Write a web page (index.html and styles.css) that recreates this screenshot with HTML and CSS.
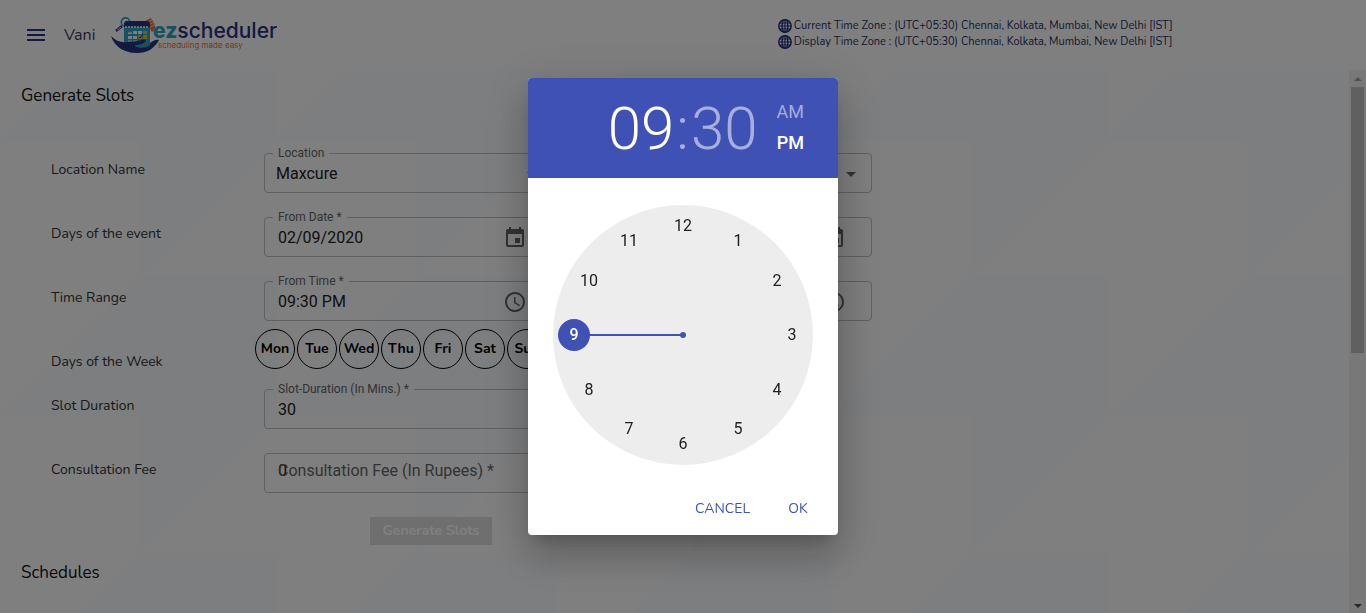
FILE: index.html
```html
<!DOCTYPE html>
<html lang="en">
<head>
<meta charset="utf-8">
<meta name="viewport" content="width=device-width, initial-scale=1">
<title>ezscheduler - Generate Slots</title>
<link rel="stylesheet" href="styles.css">
</head>
<body>
<svg width="0" height="0" class="sprite" aria-hidden="true">
  <symbol id="calendar" viewBox="0 0 24 24"><path d="M17 12h-5v5h5v-5zM16 1v2H8V1H6v2H5c-1.11 0-1.99.9-1.99 2L3 19c0 1.1.89 2 2 2h14c1.1 0 2-.9 2-2V5c0-1.1-.9-2-2-2h-1V1h-2zm3 18H5V8h14v11z"/></symbol>
  <symbol id="clock" viewBox="0 0 24 24"><path d="M11.99 2C6.47 2 2 6.48 2 12s4.47 10 9.99 10C17.52 22 22 17.52 22 12S17.52 2 11.99 2zM12 20c-4.42 0-8-3.58-8-8s3.58-8 8-8 8 3.58 8 8-3.58 8-8 8z"/><path d="M12.5 7H11v6l5.25 3.15.75-1.23-4.5-2.67z"/></symbol>
  <symbol id="arrow" viewBox="0 0 24 24"><path d="M7 10l5 5 5-5z"/></symbol>
  <symbol id="globe" viewBox="0 0 16 16"><g fill="none" stroke="currentColor" stroke-width="1.5"><circle cx="8" cy="8" r="6.2"/><ellipse cx="8" cy="8" rx="2.9" ry="6.2"/><path d="M8 2v12M2 8h12M2.8 5h10.4M2.8 11h10.4" stroke-width="1.2"/></g></symbol>
</svg>

<header class="topbar">
  <button class="menu" aria-label="Menu"><span></span><span></span><span></span></button>
  <span class="user">Vani</span>
  <a class="logo" href="#" aria-label="ezscheduler">
    <svg class="logo-mark" viewBox="0 0 48 38" aria-hidden="true">
      <path d="M34 5l6-3 1 2 1 1 3 8-4 3z" fill="#e8743b"/>
      <path d="M37 6l4-2M38 8.500l4-2M39.500 11l4-2" stroke="#fff" stroke-width=".7"/>
      <path d="M13 9h26v19c-1 4-7 5-13 5-7 0-13-3-13-8z" fill="#2aa5c5"/>
      <path d="M15 11h22v13q-5 3-10 3l-7-1-5-1z" fill="#2aa5c5"/>
      <circle cx="14.500" cy="6" r="4.200" fill="#fff" stroke="#2aa5c5" stroke-width="1.700"/>
      <path d="M13 11V8q0-3 3-3h20q3 0 3 3v3z" fill="#263282"/>
      <path d="M15 10v2M18 10v2M21 10v2M24 10v2M27 10v2M30 10v2M33 10v2M36 10v2" stroke="#fff" stroke-width="1.500"/>
      <path d="M11 10L5 15" stroke="#263282" stroke-width="2.600"/>
      <path d="M10 11L6 14.300" stroke="#fff" stroke-width=".8"/>
      <path d="M17 15h4v3h-4zM22 15h4v3h-4zM27 15h4v3h-4zM17 20h4v3h-4zM22 20h4v3h-4zM32 20h4v3h-4zM17 24.500h4v2h-4zM22 24.500h4v2h-4z" fill="#fff"/>
      <path d="M32 15h4v3h-4zM27 19h4v4h-4zM32 19h4v4h-4z" fill="#f4b52b"/>
      <path d="M17 15h4v1.500h-4z" fill="#e8743b"/>
      <path d="M28 21l1 1 3-4" fill="none" stroke="#263282"/>
      <path d="M0 20c5 5 10 7 16 6 4-1 9 0 15-2 3-1 5 0 3 2-2 2-5 2-8 3l-3 1c6 2 12 0 16-3 3-2 6-4 9-3-5 9-12 13-22 13C11 37 3 29 0 20z" fill="#263282"/>
      <path d="M24 30c5-1 8-1 11-4l4-1v4c-4 3-10 4-15 1z" fill="#2aa5c5"/>
    </svg>
    <span class="logo-text"><span class="brand"><b>ez</b>scheduler</span><span class="tagline">scheduling made easy</span></span>
  </a>
  <div class="zones">
    <div class="zone"><svg><use href="#globe"/></svg><span>Current Time Zone : (UTC+05:30) Chennai, Kolkata, Mumbai, New Delhi [IST]</span></div>
    <div class="zone"><svg><use href="#globe"/></svg><span>Display Time Zone : (UTC+05:30) Chennai, Kolkata, Mumbai, New Delhi [IST]</span></div>
  </div>
</header>

<div class="body">
  <main class="content">
    <h1 class="title">Generate Slots</h1>
    <form class="form">
      <div class="row">
        <span class="row-label">Location Name</span>
        <fieldset class="field select-field"><legend><label for="location">Location</label></legend>
          <select id="location"><option>Maxcure</option></select><svg class="icon"><use href="#arrow"/></svg></fieldset>
        <fieldset class="field select-field"><legend></legend>
          <select aria-label="Service"><option></option></select><svg class="icon"><use href="#arrow"/></svg></fieldset>
      </div>
      <div class="row">
        <span class="row-label">Days of the event</span>
        <fieldset class="field"><legend><label for="from-date">From Date *</label></legend>
          <input id="from-date" value="02/09/2020"><svg class="icon picker"><use href="#calendar"/></svg></fieldset>
        <fieldset class="field"><legend><label for="to-date">To Date *</label></legend>
          <input id="to-date" value="02/09/2020"><svg class="icon picker"><use href="#calendar"/></svg></fieldset>
      </div>
      <div class="row">
        <span class="row-label">Time Range</span>
        <fieldset class="field"><legend><label for="from-time">From Time *</label></legend>
          <input id="from-time" value="09:30 PM"><svg class="icon picker"><use href="#clock"/></svg></fieldset>
        <fieldset class="field"><legend><label for="to-time">To Time *</label></legend>
          <input id="to-time" value="09:30 PM"><svg class="icon picker"><use href="#clock"/></svg></fieldset>
      </div>
      <div class="row days-row">
        <span class="row-label">Days of the Week</span>
        <div class="days">
          <button type="button">Mon</button><button type="button">Tue</button><button type="button">Wed</button><button type="button">Thu</button><button type="button">Fri</button><button type="button">Sat</button><button type="button">Sun</button>
        </div>
      </div>
      <div class="row">
        <span class="row-label">Slot Duration</span>
        <fieldset class="field wide"><legend><label for="duration">Slot-Duration (In Mins.) *</label></legend>
          <input id="duration" value="30"></fieldset>
      </div>
      <div class="row">
        <span class="row-label">Consultation Fee</span>
        <div class="field wide plain"><input id="fee" value="0"><label for="fee">Consultation Fee (In Rupees) *</label></div>
      </div>
      <button class="generate" type="button" disabled>Generate Slots</button>
    </form>
    <h2 class="title">Schedules</h2>
  </main>
  <div class="scrollbar" aria-hidden="true"><i class="up"></i><i class="thumb"></i><i class="down"></i></div>
</div>

<div class="backdrop">
  <div class="dialog" role="dialog" aria-modal="true" aria-label="Pick a time">
    <div class="toolbar">
      <div class="time"><button class="on">09</button><span class="colon">:</span><button>30</button></div>
      <div class="period"><button>AM</button><button class="on">PM</button></div>
    </div>
    <div class="face">
      <svg class="dial" viewBox="0 0 260 260" role="img" aria-label="Hours">
        <circle cx="130" cy="130" r="130" fill="#ededed"/>
        <path d="M130 130H21" stroke="#3f51b5" stroke-width="2"/>
        <circle cx="130" cy="130" r="3" fill="#3f51b5"/>
        <circle cx="21" cy="130" r="16" fill="#3f51b5"/>
        <text x="130" y="26">12</text><text x="185" y="41">1</text><text x="224" y="81">2</text><text x="239" y="135">3</text><text x="224" y="190">4</text><text x="185" y="229">5</text><text x="130" y="244">6</text><text x="76" y="229">7</text><text x="36" y="190">8</text><text x="21" y="135" class="chosen">9</text><text x="36" y="81">10</text><text x="76" y="41">11</text>
      </svg>
    </div>
    <div class="actions"><button>CANCEL</button><button>OK</button></div>
  </div>
</div>
</body>
</html>
```
FILE: styles.css
```css
* { box-sizing: border-box; }
body {
  margin: 0;
  height: 100vh;
  display: flex;
  flex-direction: column;
  overflow: hidden;
  background: #fff;
  color: #222;
  font: 14px/20px Nunito, Lato, sans-serif;
}
button, input, select { font: inherit; color: inherit; border: 0; background: none; padding: 0; margin: 0; outline: 0; }
.sprite { position: absolute; }

.topbar { display: flex; align-items: center; height: 70px; flex: none; padding-left: 27px; }
.menu { display: flex; flex-direction: column; gap: 3px; width: 18px; }
.menu span { height: 2px; background: #263282; }
.user { margin-left: 19px; width: 47px; font-size: 16px; color: #333a5c; }
.logo { display: flex; align-items: center; color: #263282; text-decoration: none; }
.logo-mark { width: 48px; height: 38px; }
.logo-text { display: flex; flex-direction: column; margin-left: -6px; font-family: Inter, sans-serif; }
.brand { font-size: 21px; line-height: 20px; font-weight: 500; }
.brand b { font-weight: 800; color: #2aa5c5; }
.tagline { margin-left: 5px; font-size: 8px; line-height: 8px; color: #e8743b; }
.zones { margin-left: auto; width: 44%; padding-bottom: 2px; font-size: 11px; line-height: 16px; color: #263060; }
.zone { display: flex; align-items: center; gap: 1px; white-space: nowrap; }
.zone svg { width: 16px; height: 16px; color: #263282; }

.body { flex: 1; min-height: 0; display: flex; }
.content {
  flex: 1;
  overflow: hidden;
  padding: 16px 21px 0;
  background:
    conic-gradient(from 180deg, #fff 25%, transparent 0) 0 -70px / 277px 277px,
    linear-gradient(135deg, #fff 25%, #fafcff 25%, #fafcff 75%, #fff 75%) 0 -70px / 277px 277px;
}
.title { margin: 0; font-size: 17px; line-height: 20px; font-weight: 400; color: #111; }
.form { max-width: 851px; padding: 41px 0 0 30px; }
.row { display: grid; grid-template-columns: 213px 1fr 1fr; margin-bottom: 18px; }
.row-label { padding-top: 13px; color: #333; }
.field {
  display: flex;
  align-items: center;
  min-width: 0;
  height: 46px;
  margin: 0;
  padding: 0 13px 4px 8px;
  border: 1px solid #c0c0c0;
  border-radius: 4px;
  font: 16px/20px Roboto, sans-serif;
}
.row .field + .field { margin-left: 15px; }
.row .field:not(:last-child) { margin-right: 15px; }
.field legend { padding: 0 5px; height: 12px; font-size: 12px; line-height: 12px; color: #666; }
.field legend:empty { padding: 0; }
.field input { flex: 1; min-width: 0; padding-left: 5px; }
.select-field select { flex: 1; min-width: 0; appearance: none; padding-left: 3px; }
.select-field { padding-right: 8px; }
.icon { width: 24px; height: 24px; fill: #666; flex: none; }
.picker { margin-right: 12px; }
.field.wide { grid-column: 2 / 4; margin-right: 50px; }
.plain { position: relative; height: 40px; margin-top: 6px; }
.plain label { position: absolute; left: 13px; color: #666; }
.days-row { margin: -10px 0 11px; }
.days-row .row-label { padding-top: 23px; }
.days { display: flex; gap: 2px; margin-left: -9px; grid-column: 2 / 4; }
.days button { width: 40px; height: 40px; border: 1px solid #000; border-radius: 50%; font-weight: 700; color: #000; }
.generate {
  display: block;
  width: 122px;
  height: 28px;
  margin: 24px 0 18px 319px;
  background: #dfdfdf;
  color: #fff;
  font-weight: 700;
}
.scrollbar { display: flex; flex-direction: column; align-items: center; width: 17px; padding: 7px 0 5px; background: #f1f1f1; }
.scrollbar .up, .scrollbar .down { border: 4px solid transparent; width: 0; height: 4px; border-top: 0; border-bottom: 4px solid #a3a3a3; }
.scrollbar .thumb { width: 13px; height: 50%; margin-top: 6px; background: #c1c1c1; }
.scrollbar .down { margin-top: auto; border-top: 4px solid #505050; border-bottom: 0; }

.backdrop { position: fixed; inset: 0; display: flex; align-items: center; justify-content: center; background: rgba(0, 0, 0, .5); }
.dialog {
  width: 310px;
  overflow: hidden;
  border-radius: 4px;
  background: #fff;
  box-shadow: 0 11px 15px -7px rgba(0,0,0,.2), 0 24px 38px 3px rgba(0,0,0,.14), 0 9px 46px 8px rgba(0,0,0,.12);
}
.toolbar { display: flex; align-items: center; justify-content: flex-end; height: 100px; padding-right: 34px; background: #3f51b5; font-family: Roboto, sans-serif; color: rgba(255, 255, 255, .54); }
.toolbar .on { color: #fff; }
.time { display: flex; padding-top: 2px; font-size: 60px; line-height: 60px; font-weight: 300; }
.colon { margin: 0 2px; }
.period { display: flex; flex-direction: column; gap: 11px; margin-left: 19px; padding-bottom: 2px; font-size: 18px; line-height: 20px; }
.period .on { font-weight: 500; }
.face { display: flex; justify-content: center; padding: 27px 0 26px; }
.dial { width: 260px; height: 260px; }
.dial text { font: 16px Roboto, sans-serif; text-anchor: middle; fill: #212121; }
.dial .chosen { font-weight: 500; fill: #fff; }
.actions { display: flex; justify-content: flex-end; gap: 8px; padding: 0 8px 8px; }
.actions button { min-width: 64px; height: 36px; padding: 0 8px; color: #3f51b5; }
```
